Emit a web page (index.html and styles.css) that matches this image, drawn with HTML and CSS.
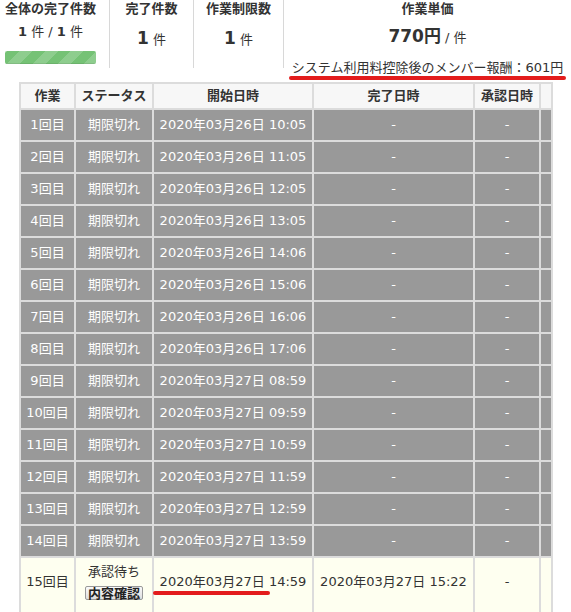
FILE: index.html
```html
<!DOCTYPE html>
<html lang="ja">
<head>
<meta charset="utf-8">
<link rel="stylesheet" href="styles.css">
</head>
<body>
<div class="stats">
  <div class="stat stat-total">
    <div class="stat-title">全体の完了件数</div>
    <div class="stat-ratio"><b>1</b> 件 / <b>1</b> 件</div>
    <div class="bar"><div class="bar-fill"></div></div>
  </div>
  <div class="stat stat-done">
    <div class="stat-title">完了件数</div>
    <div class="stat-value"><b>1</b> 件</div>
  </div>
  <div class="stat stat-limit">
    <div class="stat-title">作業制限数</div>
    <div class="stat-value"><b>1</b> 件</div>
  </div>
  <div class="stat stat-price">
    <div class="stat-title">作業単価</div>
    <div class="stat-price-value"><b>770円</b> / 件</div>
    <div class="stat-note"><span class="marked marked-wide">システム利用料控除後のメンバー報酬<span class="cjk">：</span>601円</span></div>
  </div>
</div>

<table class="tasks">
  <colgroup>
    <col class="c-no"><col class="c-status"><col class="c-start"><col class="c-end"><col class="c-approve"><col class="c-extra">
  </colgroup>
  <thead>
    <tr><th>作業</th><th>ステータス</th><th>開始日時</th><th>完了日時</th><th>承認日時</th><th></th></tr>
  </thead>
  <tbody>
    <tr class="expired"><td>1回目</td><td>期限切れ</td><td>2020年03月26日 10:05</td><td>-</td><td>-</td><td></td></tr>
    <tr class="expired"><td>2回目</td><td>期限切れ</td><td>2020年03月26日 11:05</td><td>-</td><td>-</td><td></td></tr>
    <tr class="expired"><td>3回目</td><td>期限切れ</td><td>2020年03月26日 12:05</td><td>-</td><td>-</td><td></td></tr>
    <tr class="expired"><td>4回目</td><td>期限切れ</td><td>2020年03月26日 13:05</td><td>-</td><td>-</td><td></td></tr>
    <tr class="expired"><td>5回目</td><td>期限切れ</td><td>2020年03月26日 14:06</td><td>-</td><td>-</td><td></td></tr>
    <tr class="expired"><td>6回目</td><td>期限切れ</td><td>2020年03月26日 15:06</td><td>-</td><td>-</td><td></td></tr>
    <tr class="expired"><td>7回目</td><td>期限切れ</td><td>2020年03月26日 16:06</td><td>-</td><td>-</td><td></td></tr>
    <tr class="expired"><td>8回目</td><td>期限切れ</td><td>2020年03月26日 17:06</td><td>-</td><td>-</td><td></td></tr>
    <tr class="expired"><td>9回目</td><td>期限切れ</td><td>2020年03月27日 08:59</td><td>-</td><td>-</td><td></td></tr>
    <tr class="expired"><td>10回目</td><td>期限切れ</td><td>2020年03月27日 09:59</td><td>-</td><td>-</td><td></td></tr>
    <tr class="expired"><td>11回目</td><td>期限切れ</td><td>2020年03月27日 10:59</td><td>-</td><td>-</td><td></td></tr>
    <tr class="expired"><td>12回目</td><td>期限切れ</td><td>2020年03月27日 11:59</td><td>-</td><td>-</td><td></td></tr>
    <tr class="expired"><td>13回目</td><td>期限切れ</td><td>2020年03月27日 12:59</td><td>-</td><td>-</td><td></td></tr>
    <tr class="expired"><td>14回目</td><td>期限切れ</td><td>2020年03月27日 13:59</td><td>-</td><td>-</td><td></td></tr>
    <tr class="pending">
      <td>15回目</td>
      <td><div>承認待ち</div><div class="btn-line"><button class="btn">内容確認</button></div></td>
      <td><span class="marked">2020年03月27日</span> 14:59</td>
      <td>2020年03月27日 15:22</td>
      <td>-</td>
      <td></td>
    </tr>
  </tbody>
</table>
</body>
</html>
```

FILE: styles.css
```css
html, body {
  margin: 0;
  padding: 0;
  background: #fff;
}
body {
  font-family: "DejaVu Sans", "Noto Sans CJK JP", sans-serif;
  font-size: 13px;
  line-height: 18px;
  color: #333;
  width: 571px;
  height: 612px;
  overflow: hidden;
}
.cjk {
  font-family: "Noto Sans CJK JP", sans-serif;
}

.stats {
  display: flex;
  height: 68px;
}
.stat {
  display: flex;
  flex-direction: column;
  align-items: center;
  border-right: 1px solid #d8d8d8;
}
.stat-title {
  font-weight: bold;
}
.stat-total {
  width: 91px;
  padding: 0 13px 0 5px;
}
.stat-done { width: 83px; }
.stat-limit { width: 89px; }
.stat-price {
  flex: 1;
  border-right: none;
}
.stat-ratio {
  margin-top: 5px;
}
.bar {
  margin-top: 10px;
  width: 91px;
  height: 13px;
  border-radius: 2px;
  background: #75c275;
  overflow: hidden;
}
.bar-fill {
  width: 100%;
  height: 100%;
  background: repeating-linear-gradient(-45deg,
    rgba(255,255,255,0.18) 0 9px,
    rgba(255,255,255,0) 9px 18px);
  box-shadow: inset 0 -1px 0 rgba(0,0,0,0.08);
}
.stat-value {
  margin-top: 11px;
}
.stat-value b {
  font-size: 17px;
}
.stat-price-value {
  margin-top: 9px;
}
.stat-price-value b {
  font-size: 17px;
}
.stat-note {
  margin-top: 11px;
  white-space: nowrap;
}

.marked {
  position: relative;
}
.marked::after {
  content: "";
  position: absolute;
  left: -7px;
  right: -5px;
  bottom: -6px;
  height: 4px;
  border-radius: 3px;
  background: #e31c1c;
}
.marked-wide::after {
  left: -3px;
  right: -3px;
  bottom: -5px;
}

.tasks {
  margin: 14px 0 0 19px;
  border-collapse: collapse;
  table-layout: fixed;
  width: 532px;
}
.c-no { width: 55px; }
.c-status { width: 78px; }
.c-start { width: 160px; }
.c-end { width: 161px; }
.c-approve { width: 66px; }
.c-extra { width: 12px; }

.tasks th, .tasks td {
  border: 2px solid #dcdcdc;
  text-align: center;
  white-space: nowrap;
  padding: 6px 0;
  font-weight: normal;
}
.tasks th {
  background: #f7f7f7;
  font-weight: bold;
  padding: 3px 0;
}
.tasks tr.expired td {
  background: #999;
  color: #fff;
}
.tasks tr.pending td {
  background: #fefff0;
  padding: 5px 0 12px;
}
.btn-line {
  margin-top: 5px;
  line-height: 14px;
}
.btn {
  font-family: "DejaVu Sans", "Noto Sans CJK JP", sans-serif;
  font-size: 13px;
  font-weight: bold;
  line-height: 11px;
  height: 14px;
  color: #222;
  padding: 0 2px;
  border: 1px solid #999;
  border-radius: 2px;
  background: linear-gradient(#fafafa, #dedede);
}
```
